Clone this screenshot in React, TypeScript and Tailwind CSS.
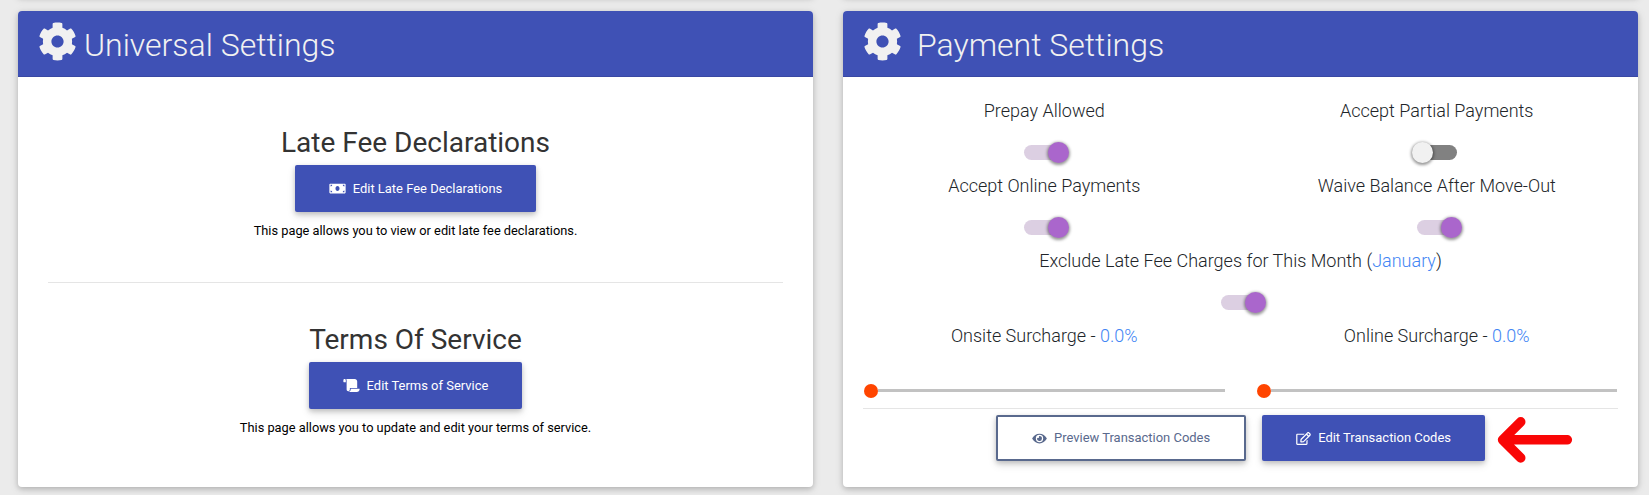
import type { ReactNode } from "react";
import { FaCog, FaEye, FaMoneyBill, FaRegEdit, FaScroll } from "react-icons/fa";

const shadow = "shadow-[0_2px_5px_0_rgba(0,0,0,0.16),0_2px_10px_0_rgba(0,0,0,0.12)]";
const btnShadow = "shadow-[0_2px_5px_0_rgba(0,0,0,0.18),0_4px_8px_0_rgba(0,0,0,0.12)]";

function Card({ title, gap, children }: { title: string; gap: string; children: ReactNode }) {
  return (
    <section className={`flex h-[476px] w-[795px] flex-col rounded-[4px] bg-white ${shadow}`}>
      <header className="flex h-[66px] shrink-0 rounded-t-[4px] border-b border-[#3948a3] bg-[#3f51b5] pl-5 text-[#f1f1f1]">
        <FaCog className="mt-[11px] size-[39px]" />
        <h2 className={`mt-[15px] text-[32px] leading-[38px] font-light ${gap}`}>{title}</h2>
      </header>
      {children}
    </section>
  );
}

function Button({
  icon,
  outline,
  height = "h-[46px]",
  children,
}: {
  icon: ReactNode;
  outline?: boolean;
  height?: string;
  children: string;
}) {
  return (
    <button
      className={`flex items-center gap-[7px] rounded-[2px] px-[34px] text-[12.96px] whitespace-nowrap ${height} ${btnShadow} ${
        outline ? "border-2 border-[#59698d] bg-white text-[#59698d]" : "bg-[#3f51b5] text-white"
      }`}
    >
      {icon}
      <span>{children}</span>
    </button>
  );
}

function Toggle({ on }: { on?: boolean }) {
  return (
    <div className={`mx-auto h-[15px] w-10 rounded-full ${on ? "bg-[#dccfe2]" : "bg-[#818181]"}`}>
      <div
        className={`relative -top-[3px] size-[21px] rounded-full shadow-[0_1px_3px_1px_rgba(0,0,0,0.4)] ${
          on ? "left-6 bg-[#aa66cc]" : "-left-[5px] bg-[#f1f1f1]"
        }`}
      />
    </div>
  );
}

function Setting({ label, on }: { label: ReactNode; on?: boolean }) {
  return (
    <div className="h-[75px] text-center">
      <p className="mb-[22px] text-[18px] leading-[24px] font-light text-[#212529]">{label}</p>
      <Toggle on={on} />
    </div>
  );
}

function Surcharge({ label }: { label: string }) {
  return (
    <div className="text-center">
      <p className="text-[18px] leading-[24px] font-light text-[#212529]">
        {label} - <span className="text-[#4285f4]">0.0%</span>
      </p>
      <div className="mt-9 flex h-[14px] items-center">
        <div className="ml-px size-[14px] shrink-0 rounded-full bg-[#ff4500]" />
        <div className="mr-px mb-px h-[3px] flex-1 bg-[#c2c2c2]" />
      </div>
    </div>
  );
}

function Section({ title, button, text }: { title: string; button: ReactNode; text: string }) {
  return (
    <div className="flex flex-col items-center">
      <h3 className="mb-[5px] text-[28px] leading-[34px] text-[#333]">{title}</h3>
      {button}
      <p className="mt-[9px] text-[12.8px] leading-5 text-black">{text}</p>
    </div>
  );
}

export default function App() {
  return (
    <div className="flex h-[495px] w-[1649px] flex-col overflow-hidden bg-[#ebebeb] font-[Roboto,sans-serif]">
      {/* bottom edge of the row of cards above */}
      <div className="-mt-3 flex h-[23px] shrink-0 gap-[30px] pl-[18px]">
        <div className={`h-2 w-[795px] ${shadow}`} />
        <div className={`h-2 w-[795px] ${shadow}`} />
      </div>

      <div className="flex gap-[30px] pl-[18px]">
        <Card title="Universal Settings" gap="ml-[7px]">
          <div className="px-[30px] pt-[49px]">
            <Section
              title="Late Fee Declarations"
              button={
                <Button height="h-[47px]" icon={<FaMoneyBill className="h-[13px] w-[17px]" />}>
                  Edit Late Fee Declarations
                </Button>
              }
              text="This page allows you to view or edit late fee declarations."
            />
            <hr className="mt-[41px] mb-[40px] border-black/10" />
            <Section
              title="Terms Of Service"
              button={
                <Button height="h-[47px]" icon={<FaScroll className="h-[13px] w-[17px]" />}>
                  Edit Terms of Service
                </Button>
              }
              text="This page allows you to update and edit your terms of service."
            />
          </div>
        </Card>

        <Card title="Payment Settings" gap="ml-[15px]">
          <div className="px-5 pt-[22px]">
            <div className="grid grid-cols-2 gap-x-[30px]">
              <Setting label="Prepay Allowed" on />
              <Setting label="Accept Partial Payments" />
              <Setting label="Accept Online Payments" on />
              <Setting label="Waive Balance After Move-Out" on />
            </div>
            <Setting
              label={
                <>
                  Exclude Late Fee Charges for This Month (<span className="text-[#4285f4]">January</span>)
                </>
              }
              on
            />
            <div className="grid grid-cols-2 gap-x-[30px]">
              <Surcharge label="Onsite Surcharge" />
              <Surcharge label="Online Surcharge" />
            </div>
            <hr className="mt-[10px] mb-[6px] border-black/10" />
            <div className="flex items-start pl-[133px]">
              <Button outline icon={<FaEye className="h-[13px] w-[15px]" />}>
                Preview Transaction Codes
              </Button>
              <div className="ml-4">
                <Button icon={<FaRegEdit className="h-[13px] w-[15px]" />}>Edit Transaction Codes</Button>
              </div>
              <svg className="mt-px ml-3 h-[48px] w-[76px]" viewBox="0 0 76 48" fill="none">
                <path
                  d="M23.7 5.9 5.6 23.8l18.1 18.1M8 23.8h62.3"
                  stroke="#f90606"
                  strokeWidth="9.6"
                  strokeLinecap="round"
                  strokeLinejoin="round"
                />
              </svg>
            </div>
          </div>
        </Card>
      </div>
    </div>
  );
}
